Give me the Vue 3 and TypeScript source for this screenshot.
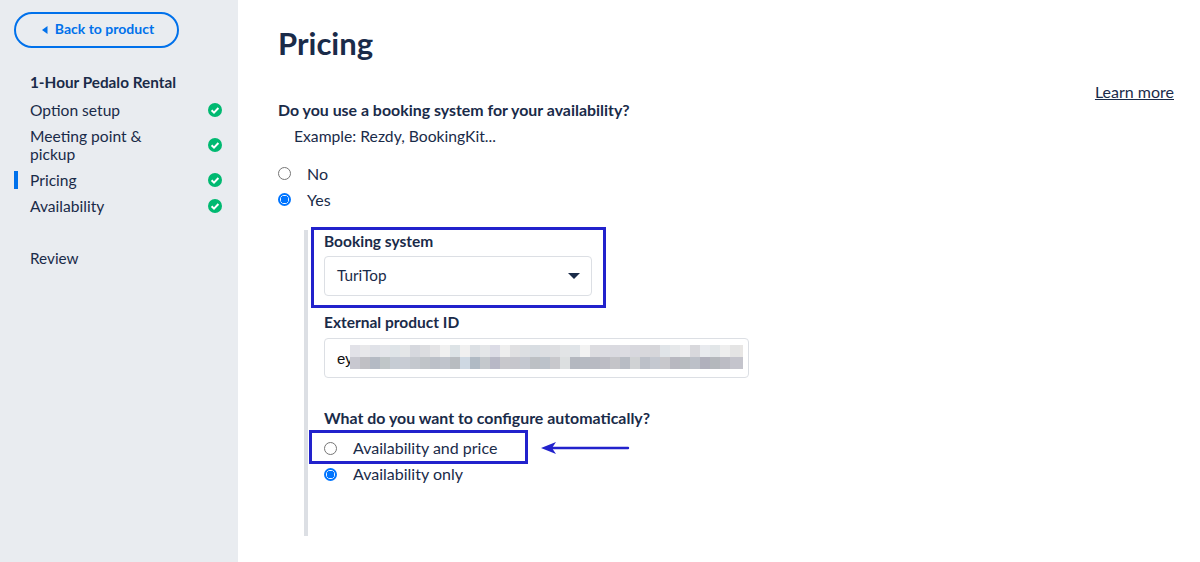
<script setup lang="ts">
const steps = [
  { label: 'Option setup', active: false },
  { label: 'Meeting point & pickup', active: false },
  { label: 'Pricing', active: true },
  { label: 'Availability', active: false },
]

// pixelated part of the product id, two rows of blocks
const topRow = ['#e2e2e8','#e8e8ea','#e0e2e8','#e4e6ea','#dfe4e8','#e4e6e8','#d6d8de','#dcdde0','#e4e4e6','#f0f0f0','#dde3e6','#f0f0f0','#dce0e4','#e4e6e8','#dcdce6','#eeeeee','#e0e0e2','#dcdfe2','#d8dde2','#dcdee2','#dedfe2','#e2e4e6','#e0e4e8','#f2f2f2','#dcdce0','#dcdce2','#dadae0','#dcdce2','#d8d8de','#d8d8dc','#d6d6da','#e0e4e8','#e6e8ea','#ececee','#d8d8dc','#e8eaee','#e2e6e8','#eeeeee','#e4e4e4','#e8e6e4']
const bottomRow = ['#c8c8d0','#c0c0c4','#b4bac4','#c0c6c8','#c6ccd4','#c8ccd4','#c4c8ce','#c0c4c8','#bcc0c8','#c0c4cc','#b8bcc0','#ced8e2','#b0bac4','#c4c8cc','#b8b8c6','#c8c8cc','#c6c6cc','#c4c8d0','#bcc0c4','#bcc2ca','#c8c8cc','#dcdfe0','#b4b8c0','#b6bac2','#b8bac2','#bcbcc4','#c4c4c8','#b8bcc4','#d0d2d4','#bcc0c8','#c4c8d0','#c8c8cc','#b8b8c0','#b8bcc0','#bcc0c8','#b0b0bc','#b4b8bc','#bcbcc4','#c4c4cc','#c4c4cc']
</script>

<template>
  <div class="page">
    <aside class="sidebar">
      <a class="back">
        <svg width="6" height="8" viewBox="0 0 6 8"><path d="M5.5 0v8L0 4z" fill="currentColor" /></svg>
        <span>Back to product</span>
      </a>
      <div class="product">1-Hour Pedalo Rental</div>
      <ul class="steps">
        <li v-for="s in steps" :key="s.label" class="step" :class="{ active: s.active }">
          <span class="step-label">{{ s.label }}</span>
          <svg class="check" width="14" height="14" viewBox="0 0 14 14">
            <circle cx="7" cy="7" r="7" fill="#00b971" />
            <path d="M3.6 7.2l2.4 2.4 4.4-4.6" fill="none" stroke="#fff" stroke-width="2" />
          </svg>
        </li>
      </ul>
      <div class="review">Review</div>
    </aside>

    <main class="main">
      <h1>Pricing</h1>
      <div class="learn-row"><a class="learn">Learn more</a></div>
      <p class="question">Do you use a booking system for your availability?</p>
      <p class="example">Example: Rezdy, BookingKit...</p>

      <div class="radios">
        <label class="radio"><span class="dot"></span>No</label>
        <label class="radio"><span class="dot on"></span>Yes</label>
      </div>

      <section class="nested">
        <div class="field">
          <div class="field-label">Booking system</div>
          <div class="select">
            <span>TuriTop</span>
            <svg width="12" height="6" viewBox="0 0 12 6"><path d="M0 0h12L6 6z" fill="#1a2b49" /></svg>
          </div>
        </div>
        <div class="field">
          <div class="field-label">External product ID</div>
          <div class="input">
            <span class="id-start">ey</span>
            <div class="blur">
              <div class="blur-row"><i v-for="(c, i) in topRow" :key="i" :style="{ background: c }"></i></div>
              <div class="blur-row"><i v-for="(c, i) in bottomRow" :key="i" :style="{ background: c }"></i></div>
            </div>
          </div>
        </div>
        <div class="field-label config">What do you want to configure automatically?</div>
        <label class="radio first"><span class="dot"></span><span class="radio-text">Availability and price</span></label>
        <label class="radio"><span class="dot on"></span><span class="radio-text">Availability only</span></label>
      </section>

      <!-- annotations drawn on top of the screenshot -->
      <div class="mark mark-select"></div>
      <div class="mark mark-radio"></div>
      <svg class="arrow" width="90" height="14" viewBox="0 0 90 14">
        <path d="M87 7H10" stroke="#2222cc" stroke-width="2.4" stroke-linecap="round" />
        <path d="M0 7l15-6-4 6 4 6z" fill="#2222cc" />
      </svg>
    </main>
  </div>
</template>

<style>
body { margin: 0; background: #fff; }
</style>

<style scoped>
.page {
  display: flex;
  height: 562px;
  overflow: hidden;
  font-family: Lato, "Noto Sans", sans-serif;
  font-size: 16px;
  color: #1a2b49;
}
.sidebar {
  width: 238px;
  flex-shrink: 0;
  box-sizing: border-box;
  background: #e9ecf0;
  padding: 12px 16px 0 14px;
}
.back {
  display: flex;
  align-items: center;
  justify-content: center;
  gap: 7px;
  width: 165px;
  height: 36px;
  box-sizing: border-box;
  padding: 0 0 3px 3px;
  border: 2px solid #0071eb;
  border-radius: 18px;
  color: #0071eb;
  font-size: 14px;
  font-weight: 700;
}
.back svg { margin-top: 3px; }
.product {
  margin-top: 23px;
  padding-left: 16px;
  font-size: 15.3px;
  font-weight: 700;
  line-height: 22px;
}
.steps {
  list-style: none;
  margin: 8px 0 0;
  padding: 0;
  display: flex;
  flex-direction: column;
  gap: 8px;
  font-size: 15.6px;
}
.step {
  position: relative;
  display: flex;
  align-items: center;
  justify-content: space-between;
  padding-left: 16px;
  line-height: 18px;
}
.step.active::before {
  content: '';
  position: absolute;
  left: 0;
  top: 0;
  width: 4px;
  height: 18px;
  background: #0071eb;
}
.step-label { width: 130px; }
.review {
  margin-top: 34px;
  padding-left: 16px;
  font-size: 15.3px;
  line-height: 18px;
}
.main {
  position: relative;
  flex: 1;
  padding: 23px 26px 0 40px;
}
h1 {
  margin: 0;
  font-size: 31px;
  line-height: 40px;
  font-weight: 700;
}
.learn-row {
  display: flex;
  justify-content: flex-end;
  margin-top: 19px;
  line-height: 20px;
}
.learn { text-decoration: underline; }
.question {
  margin: -1px 0 0;
  font-weight: 700;
  font-size: 15.9px;
  line-height: 18px;
}
.example {
  margin: 8px 0 0 16px;
  line-height: 18px;
  font-size: 15.7px;
}
.radios {
  margin-top: 15px;
}
.radio {
  display: flex;
  align-items: center;
  height: 26px;
  gap: 16px;
}
.radio-text { padding-bottom: 2px; }
.dot {
  width: 13px;
  height: 13px;
  box-sizing: border-box;
  border: 1px solid #767676;
  border-radius: 50%;
  background: #fff;
}
.dot.on {
  border: 2px solid #0075ff;
  background: radial-gradient(circle, #0075ff 0 3.6px, #fff 4px);
}
.nested {
  margin: 18px 0 0 26px;
  height: 306px;
  box-sizing: border-box;
  border-left: 4px solid #dcdfe4;
  padding: 1px 0 0 16px;
}
.field { margin-bottom: 16px; }
.field-label {
  font-weight: 700;
  font-size: 15.5px;
  line-height: 20px;
}
.select, .input {
  display: flex;
  align-items: center;
  box-sizing: border-box;
  height: 40px;
  border: 1px solid #dcdfe4;
  border-radius: 4px;
}
.select {
  width: 268px;
  margin-top: 5px;
  padding: 0 11px 0 12px;
  justify-content: space-between;
  font-size: 15.3px;
}
.select span { padding-bottom: 2px; }
.input {
  width: 425px;
  margin-top: 6px;
  padding: 0 12px;
  font-family: "Liberation Sans", sans-serif;
  font-size: 15px;
  color: #111;
}
.id-start { width: 13px; flex-shrink: 0; white-space: nowrap; }
.blur { position: relative; flex: 0 0 393px; margin-top: -2px; overflow: hidden; }
.blur-row { display: flex; height: 12px; }
.blur-row i { display: block; width: 10px; height: 12px; flex-shrink: 0; }
.config { margin-top: 30px; font-size: 15.9px; }
.radio.first { margin-top: 7px; }
.mark {
  position: absolute;
  box-sizing: border-box;
  border: 3px solid #2222cc;
}
.mark-select { left: 73px; top: 227px; width: 295px; height: 81px; }
.mark-radio { left: 71px; top: 430px; width: 219px; height: 34px; }
.arrow { position: absolute; left: 303px; top: 441px; }
</style>
